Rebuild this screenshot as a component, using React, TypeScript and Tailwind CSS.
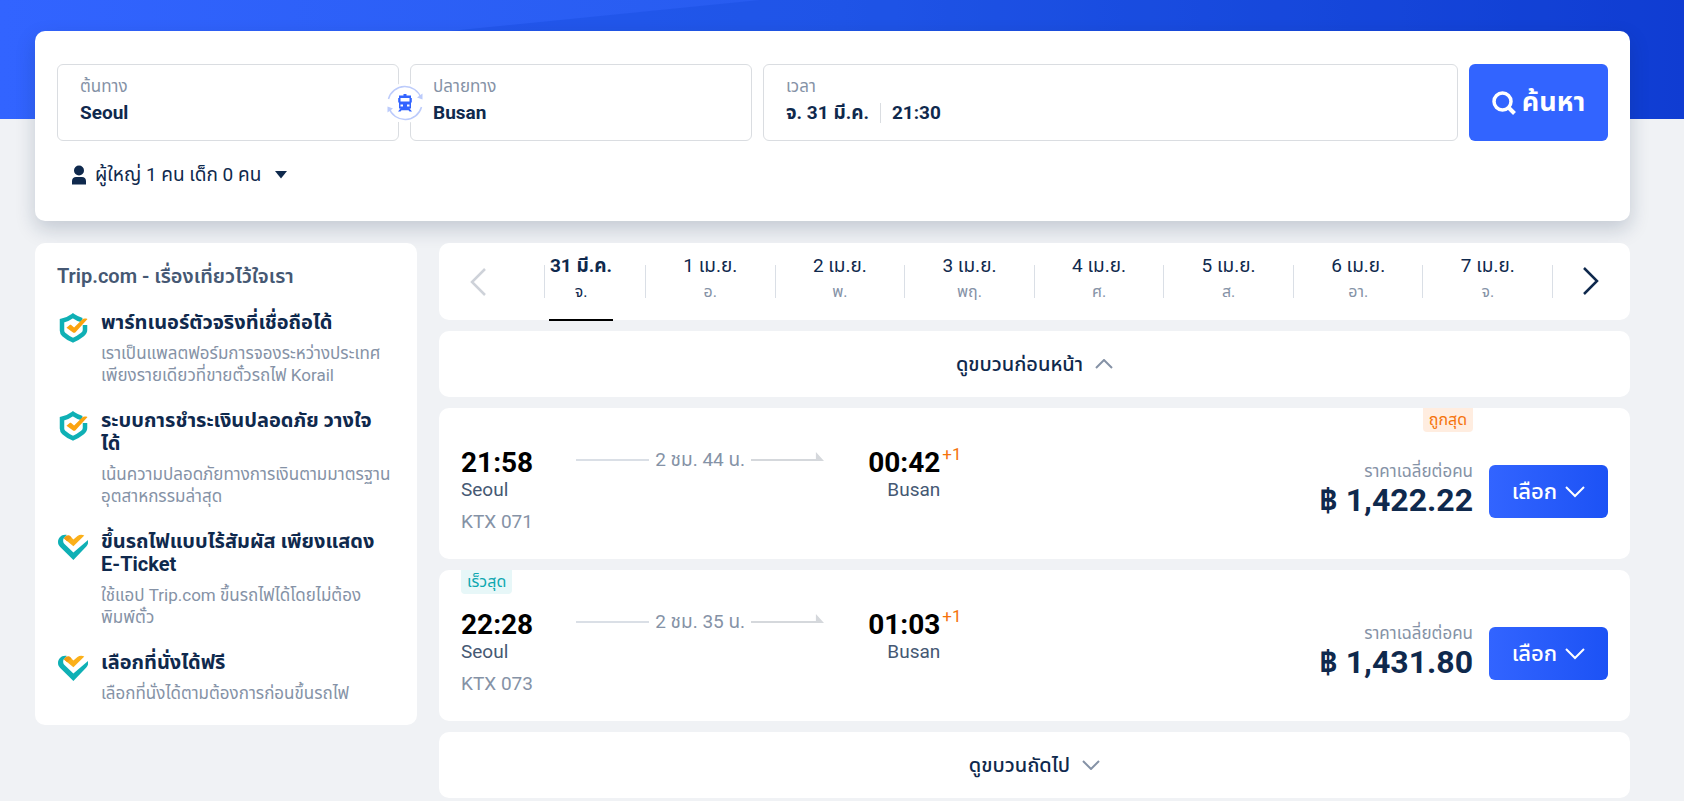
import React from 'react';

interface Perk {
  icon: 'shield' | 'heart';
  title: string;
  text: string;
}

interface Train {
  depart: string;
  arrive: string;
  duration: string;
  name: string;
  price: string;
  fastest?: boolean;
  cheapest?: boolean;
}

const perks: Perk[] = [
  {
    icon: 'shield',
    title: 'พาร์ทเนอร์ตัวจริงที่เชื่อถือได้',
    text: 'เราเป็นแพลตฟอร์มการจองระหว่างประเทศ\nเพียงรายเดียวที่ขายตั๋วรถไฟ Korail',
  },
  {
    icon: 'shield',
    title: 'ระบบการชำระเงินปลอดภัย วางใจ\nได้',
    text: 'เน้นความปลอดภัยทางการเงินตามมาตรฐาน\nอุตสาหกรรมล่าสุด',
  },
  {
    icon: 'heart',
    title: 'ขึ้นรถไฟแบบไร้สัมผัส เพียงแสดง\nE-Ticket',
    text: 'ใช้แอป Trip.com ขึ้นรถไฟได้โดยไม่ต้อง\nพิมพ์ตั๋ว',
  },
  {
    icon: 'heart',
    title: 'เลือกที่นั่งได้ฟรี',
    text: 'เลือกที่นั่งได้ตามต้องการก่อนขึ้นรถไฟ',
  },
];

const days = [
  { date: '1 เม.ย.', day: 'อ.' },
  { date: '2 เม.ย.', day: 'พ.' },
  { date: '3 เม.ย.', day: 'พฤ.' },
  { date: '4 เม.ย.', day: 'ศ.' },
  { date: '5 เม.ย.', day: 'ส.' },
  { date: '6 เม.ย.', day: 'อา.' },
  { date: '7 เม.ย.', day: 'จ.' },
];

const trains: Train[] = [
  { depart: '21:58', arrive: '00:42', duration: '2 ชม. 44 น.', name: 'KTX 071', price: '฿ 1,422.22', cheapest: true },
  { depart: '22:28', arrive: '01:03', duration: '2 ชม. 35 น.', name: 'KTX 073', price: '฿ 1,431.80', fastest: true },
];

const ShieldIcon = () => (
  <svg className="h-[30px] w-[31px]" viewBox="-2 0 31 30" fill="none">
    <path
      d="M26 12v5c0 2-1 3.300-2.500 4.500C21 23.500 18 25.500 14 27.200 10 25.500 7 23.500 4.800 21.500 3.500 20.300 3 19 3 17.500V7.800C7.500 6.800 11 5 14 2.800c3 2 5.500 3.300 9 4.300"
      stroke="#0fb0b5"
      strokeWidth="4.500"
    />
    <path
      d="M7.500 14.800l3.200-2.700c.5-.4 1-.4 1.500 0l2.900 2.300L23.500 6.200c.8-.7 3-.9 5-.2L16.500 19.200c-.8.800-2 .8-2.800.1z"
      fill="#fba30f"
    />
  </svg>
);

const HeartIcon = () => (
  <svg className="h-[30px] w-[31px]" viewBox="-1 -2 31 30">
    <path d="M6 4.500C7 2 9.500.8 12 2l3.400 3.500L19.500 2c2-1.600 4.500-1.700 6.800-.5L15.400 12.200z" fill="#fbb01a" />
    <path d="M6 4.500C7 2 9.500.8 12 2l1.500 1.500-4.300 3.700z" fill="#f29b12" />
    <path
      d="M9 1C4-.2 0 3.500 0 8c0 2 .8 3.500 2.200 4.900L15.400 26 28.300 12.500c1.700-1.700 2.300-4 1.700-6.500L15.400 18.500 6.500 10C4.500 8 5 5 6.200 3.700 7 2.500 8 1.500 9 1z"
      fill="#0fb0b5"
    />
  </svg>
);

const SwapIcon = () => (
  <svg className="h-[40px] w-[40px]" viewBox="0 0 40 40" fill="none">
    <circle cx="20" cy="20" r="20" fill="#fff" />
    <path d="M3.500 16A17 17 0 0 1 36 15" stroke="#bccbfb" strokeWidth="1.500" />
    <path d="M36.500 24A17 17 0 0 1 4 25" stroke="#bccbfb" strokeWidth="1.500" />
    <path d="M37.500 10.500v6l-5.500-2z" fill="#bccbfb" />
    <path d="M2.500 29.500v-6l5.500 2z" fill="#bccbfb" />
    <path
      fillRule="evenodd"
      d="M18.500 11h3v1.500H26V15h.8v4.500H26v6h-1.500l2.500 3h-2.500l-1-1.200h-7l-1 1.200H13l2.500-3H14v-6h-.8V15h.8v-2.500h4.500zM15.500 15v3.500h9V15zm0 6.500v2H18v-2zm6.500 0v2h2.500v-2z"
      fill="#3264ff"
    />
  </svg>
);

const Chevron: React.FC<{ className: string; path: string; box: string; width?: number }> = ({
  className,
  path,
  box,
  width = 2,
}) => (
  <svg className={className} viewBox={box} fill="none" stroke="currentColor" strokeWidth={width}>
    <path d={path} />
  </svg>
);

const SearchPanel = () => {
  return (
    <form
      className="rounded-[10px] bg-white px-[22px] pt-[33px] pb-8 shadow-[0_8px_20px_rgba(15,41,77,0.2)]"
      onSubmit={(e) => e.preventDefault()}
    >
      <div className="grid h-[77px] grid-cols-[minmax(0,1fr)_minmax(0,1fr)_139px] gap-[11px]">
        <div className="relative grid grid-cols-2 gap-[11px]">
          <label className="flex flex-col rounded-md border border-[#dadde1] px-[22px] pt-2">
            <span className="text-[17px] leading-[26px] text-[#8592a6]">ต้นทาง</span>
            <input className="w-full text-[19px] leading-7 font-bold text-[#0f294d] outline-none" defaultValue="Seoul" />
          </label>
          <label className="flex flex-col rounded-md border border-[#dadde1] px-[22px] pt-2">
            <span className="text-[17px] leading-[26px] text-[#8592a6]">ปลายทาง</span>
            <input className="w-full text-[19px] leading-7 font-bold text-[#0f294d] outline-none" defaultValue="Busan" />
          </label>
          <button
            type="button"
            aria-label="สลับ"
            className="absolute top-1/2 left-1/2 -translate-x-1/2 -translate-y-1/2"
          >
            <SwapIcon />
          </button>
        </div>
        <button type="button" className="flex flex-col rounded-md border border-[#dadde1] px-[22px] pt-2 text-left">
          <span className="text-[17px] leading-[26px] text-[#8592a6]">เวลา</span>
          <span className="flex items-center text-[19px] leading-7 font-bold text-[#0f294d]">
            จ. 31 มี.ค.
            <span className="mx-[11px] h-5 w-px bg-[#dadde1]" />
            21:30
          </span>
        </button>
        <button
          type="submit"
          className="flex items-center justify-center gap-1.5 rounded-md bg-[#3264ff] text-[27px] font-bold text-white"
        >
          <svg className="h-6 w-6" viewBox="0 0 24 24" fill="none" stroke="currentColor" strokeWidth="3.500">
            <circle cx="10.500" cy="10.500" r="8.500" />
            <path d="M16.500 16.500l6 6" strokeWidth="4" />
          </svg>
          ค้นหา
        </button>
      </div>
      <button type="button" className="mt-5 flex items-center px-3.5 text-[19px] leading-7 text-[#0f294d]">
        <svg className="mr-2 h-5 w-4" viewBox="0 0 16 20" fill="currentColor">
          <circle cx="8" cy="5.500" r="5" />
          <path d="M1 19.500v-3.500c0-2.500 1.800-4 4-4h6c2.200 0 4 1.500 4 4v3.500z" />
        </svg>
        ผู้ใหญ่ 1 คน เด็ก 0 คน
        <svg className="ml-3.5 h-2 w-3" viewBox="0 0 12 8" fill="currentColor">
          <path d="M0 0h12L6 7.500z" />
        </svg>
      </button>
    </form>
  );
};

const Sidebar = () => {
  return (
    <aside className="w-[382px] flex-shrink-0 rounded-[10px] bg-white px-[22px] pt-5 pb-5">
      <h2 className="text-xl leading-[26px] font-semibold text-[#455873]">Trip.com - เรื่องเที่ยวไว้ใจเรา</h2>
      <ul className="mt-[22px] flex flex-col gap-[22px]">
        {perks.map((perk) => (
          <li key={perk.title} className="flex gap-[13px]">
            <div className="mt-0.5 flex-shrink-0">
              {perk.icon === 'shield' ? <ShieldIcon /> : <HeartIcon />}
            </div>
            <div className="whitespace-pre">
              <h3 className="text-xl leading-[23px] font-bold text-[#0f294d]">{perk.title}</h3>
              <p className="mt-2 pb-px text-[17px] leading-[22px] text-[#8592a6]">{perk.text}</p>
            </div>
          </li>
        ))}
      </ul>
    </aside>
  );
};

const DateBar = () => {
  return (
    <nav className="flex h-[77px] items-stretch rounded-[10px] bg-white">
      <button aria-label="ก่อนหน้า" className="flex w-[105px] items-center pl-[31px] text-[#ced2d9]">
        <Chevron className="h-7 w-4" box="0 0 16 28" path="M15 1L2 14l13 13" width={2.5} />
      </button>
      <button className="flex w-[101px] pt-2 pr-7 text-center text-[#0f294d]">
        <span className="mt-3.5 h-[33px] w-px bg-[#dadfe6]" />
        <span className="mx-1 flex h-[70px] flex-1 flex-col border-b-2 border-black whitespace-nowrap">
          <span className="text-[19px] leading-[30px] font-bold">31 มี.ค.</span>
          <span className="text-base leading-[22px]">จ.</span>
        </span>
      </button>
      {days.map((item) => (
        <button key={item.date} className="flex flex-1 pt-2">
          <span className="mt-3.5 h-[33px] w-px bg-[#dadfe6]" />
          <span className="flex flex-1 flex-col">
            <span className="text-[19px] leading-[30px] text-[#0f294d]">{item.date}</span>
            <span className="text-base leading-[22px] text-[#8592a6]">{item.day}</span>
          </span>
        </button>
      ))}
      <button aria-label="ถัดไป" className="flex w-[78px] pt-2 text-[#0f294d]">
        <span className="mt-3.5 h-[33px] w-px bg-[#dadfe6]" />
        <Chevron className="mt-4 ml-[30px] h-7 w-4" box="0 0 16 28" path="M1 1l13 13L1 27" width={2.5} />
      </button>
    </nav>
  );
};

const TrainCard: React.FC<{ train: Train }> = ({ train }) => {
  return (
    <article className="relative flex h-[151px] items-start justify-between rounded-[10px] bg-white px-[22px] pt-[38px]">
      {train.fastest && (
        <span className="absolute top-0 left-[22px] rounded-b bg-[#e7f7f8] px-1.5 text-base leading-6 text-[#0da8b0]">
          เร็วสุด
        </span>
      )}
      <div className="flex">
        <div>
          <p className="text-[28px] leading-[33px] font-bold text-black">{train.depart}</p>
          <p className="text-[19px] leading-[22px] text-[#455873]">Seoul</p>
          <p className="mt-2.5 text-[19px] leading-[22px] text-[#8592a6]">{train.name}</p>
        </div>
        <div className="mr-11 ml-[43px] flex h-7 w-[248px] items-center text-[19px] text-[#8592a6]">
          <span className="h-0.5 flex-1 bg-[#dadfe6]" />
          <span className="px-1.5 whitespace-nowrap">{train.duration}</span>
          <svg className="h-5 flex-1" viewBox="0 0 72 20" preserveAspectRatio="xMaxYMid slice" fill="#d5d8dc">
            <path d="M-20 9h84V2l8 9h-92z" />
          </svg>
        </div>
        <div className="text-right">
          <p className="text-[28px] leading-[33px] font-bold text-black">{train.arrive}</p>
          <p className="text-[19px] leading-[22px] text-[#455873]">Busan</p>
        </div>
        <span className="ml-0.5 text-[17px] leading-4 text-[#f5730a]">+1</span>
      </div>
      <div className="flex">
        {train.cheapest && (
          <span className="absolute top-0 right-[157px] rounded-b bg-[#ffede0] px-1.5 text-base leading-6 text-[#f5730a]">
            ถูกสุด
          </span>
        )}
        <div className="mt-3.5 text-right">
          <p className="text-[17px] leading-[22px] text-[#8592a6]">ราคาเฉลี่ยต่อคน</p>
          <p className="text-[32px] leading-9 font-bold text-[#0f294d]">{train.price}</p>
        </div>
        <button className="mt-[19px] ml-4 flex h-[53px] w-[119px] items-center justify-center gap-2 rounded-md bg-linear-to-r from-[#3264ff] to-[#1c52f5] text-[22px] font-medium text-white">
          เลือก
          <Chevron className="h-3 w-5" box="0 0 20 12" path="M1 1l9 9 9-9" />
        </button>
      </div>
    </article>
  );
};

const App: React.FC = () => {
  return (
    <div className="min-h-screen bg-[#f0f2f5] font-['Roboto','Noto_Sans_Thai','Noto_Sans',sans-serif]">
      <div className="relative h-[119px] overflow-hidden bg-linear-to-r from-[#3264ff] via-[#265bee] to-[#1039d0]">
        <svg className="h-full w-full" viewBox="0 0 1684 119" preserveAspectRatio="none">
          <path d="M430 33L760 0h924v119H430z" fill="#1246d8" fillOpacity="0.3" />
        </svg>
      </div>
      <main className="relative -mt-[88px] mr-[54px] ml-[35px]">
        <SearchPanel />
        <div className="mt-[22px] flex items-start gap-[22px]">
          <Sidebar />
          <section className="flex min-w-0 flex-1 flex-col gap-[11px]">
            <DateBar />
            <button className="flex h-[66px] items-center justify-center gap-3 rounded-[10px] bg-white text-xl font-medium text-[#0f294d]">
              ดูขบวนก่อนหน้า
              <Chevron className="h-2.5 w-[18px] text-[#8592a6]" box="0 0 18 10" path="M1 9l8-8 8 8" />
            </button>
            {trains.map((train) => (
              <TrainCard key={train.name} train={train} />
            ))}
            <button className="flex h-[66px] items-center justify-center gap-3 rounded-[10px] bg-white text-xl font-medium text-[#0f294d]">
              ดูขบวนถัดไป
              <Chevron className="h-2.5 w-[18px] text-[#8592a6]" box="0 0 18 10" path="M1 1l8 8 8-8" />
            </button>
          </section>
        </div>
      </main>
    </div>
  );
};

export default App;
